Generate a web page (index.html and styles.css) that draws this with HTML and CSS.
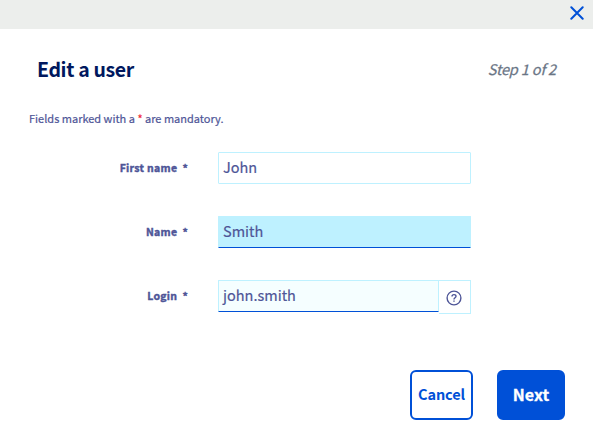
FILE: index.html
```html
<!DOCTYPE html>
<html lang="en">
<head>
<meta charset="utf-8">
<title>Edit a user</title>
<link rel="stylesheet" href="styles.css">
</head>
<body>
<main class="dialog">
  <div class="topbar">
    <button class="close" type="button" aria-label="Close"><svg width="14" height="14" viewBox="0 0 14 14"><path d="M1.3 1.3 12.7 12.7M12.7 1.3 1.3 12.7"/></svg></button>
  </div>
  <header class="heading">
    <h1>Edit a user</h1>
    <div class="step">Step 1 of 2</div>
  </header>
  <p class="hint">Fields marked with a <span class="required">*</span> are mandatory.</p>
  <form class="form">
    <div class="row">
      <div class="label"><span>First name</span><span>*</span></div>
      <div class="field">John</div>
    </div>
    <div class="row">
      <div class="label"><span>Name</span><span>*</span></div>
      <div class="field focused">Smith</div>
    </div>
    <div class="row">
      <div class="label"><span>Login</span><span>*</span></div>
      <div class="field hovered">john.smith</div>
      <div class="help"><svg width="16" height="16" viewBox="0 0 16 16"><circle cx="8" cy="8" r="6.9"/><path d="M6 6.5C6 5.2 6.8 4.6 8 4.6s2 .7 2 1.7c0 1.4-2 1.5-2 3.1"/><path d="M8 10.5v1.3"/></svg></div>
    </div>
  </form>
  <footer class="actions">
    <button class="btn cancel" type="button">Cancel</button>
    <button class="btn next" type="button">Next</button>
  </footer>
</main>
</body>
</html>
```
FILE: styles.css
```css
* { box-sizing: border-box; }
body {
  margin: 0;
  background: #fff;
  color: #4e5597;
  font-family: "Noto Sans CJK SC", "Open Sans", sans-serif;
}
button { font-family: inherit; padding: 0; cursor: pointer; }
.dialog { width: 593px; height: 441px; overflow: hidden; }
.topbar {
  height: 29px;
  background: #eceeec;
  display: flex;
  justify-content: flex-end;
  padding: 6px 9px 0 0;
}
.close { border: 0; background: none; width: 14px; height: 14px; }
.close svg { display: block; fill: none; stroke: #0050d7; stroke-width: 2; stroke-linecap: round; }
.heading {
  height: 78px;
  padding: 2px 37px 0 37px;
  display: flex;
  justify-content: space-between;
  align-items: center;
}
h1 { margin: 0; font-size: 19.5px; line-height: 30px; font-weight: 700; letter-spacing: -.35px; color: #00185e; }
.step { font-size: 14.5px; line-height: 20px; font-style: italic; letter-spacing: -.15px; color: #6a7585; -webkit-text-stroke: .25px; }
.hint { margin: 0; padding-left: 29px; font-size: 11px; line-height: 22px; height: 22px; white-space: nowrap; -webkit-text-stroke: .2px; }
.required { color: #f01e32; }
.form { margin-top: 23px; display: grid; gap: 30px; }
.row { display: flex; height: 34px; }
.label {
  width: 188px;
  margin-right: 30px;
  display: flex;
  justify-content: flex-end;
  gap: 5px;
  font-size: 10.5px;
  line-height: 31px;
  font-weight: 700;
  letter-spacing: .3px;
  -webkit-text-stroke: .4px;
}
.field {
  width: 253px;
  height: 32px;
  padding-left: 4px;
  border: 1px solid #bef1ff;
  border-radius: 1px;
  font-size: 14.5px;
  line-height: 27px;
  -webkit-text-stroke: .2px;
}
.focused { background: #bef1ff; border-bottom-color: #0050d7; }
.hovered { width: 221px; background: #f5feff; border-bottom-color: #0050d7; }
.help {
  width: 32px;
  height: 34px;
  padding: 2px 1px 0 0;
  border: 1px solid #bef1ff;
  border-left: 0;
  display: grid;
  place-items: center;
}
.help svg { fill: none; stroke: #4e5597; stroke-width: 1.4; }
.actions { margin-top: 56px; padding-right: 28px; display: flex; justify-content: flex-end; gap: 24px; }
.btn { height: 50px; border: 2px solid #0050d7; border-radius: 6px; font-weight: 700; padding-bottom: 2px; }
.cancel { width: 63px; padding-bottom: 3px; background: #fff; color: #0050d7; font-size: 14.5px; letter-spacing: -.1px; }
.next { width: 68px; background: #0050d7; color: #fff; font-size: 16px; -webkit-text-stroke: .3px; }
```
